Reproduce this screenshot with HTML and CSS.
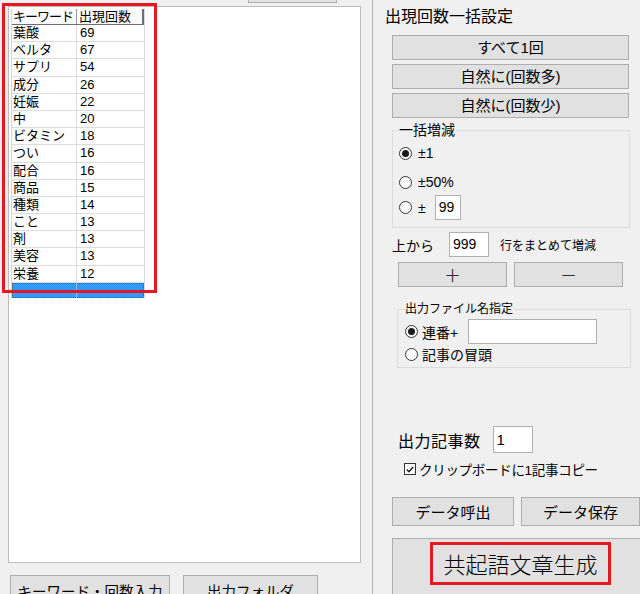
FILE: index.html
```html
<!DOCTYPE html>
<html lang="ja">
<head>
<meta charset="utf-8">
<title>共起語文章生成</title>
<link rel="stylesheet" href="styles.css">
</head>
<body>
<div class="app">
  <div class="left">
    <div class="top-strip"><div class="top-btn"></div></div>
    <div class="listbox">
      <div class="grid">
        <div class="grow head"><div class="c1 kana">キーワード</div><div class="c2">出現回数</div></div>
        <div class="grow"><div class="c1">葉酸</div><div class="c2">69</div></div>
        <div class="grow"><div class="c1">ベルタ</div><div class="c2">67</div></div>
        <div class="grow"><div class="c1">サプリ</div><div class="c2">54</div></div>
        <div class="grow"><div class="c1">成分</div><div class="c2">26</div></div>
        <div class="grow"><div class="c1">妊娠</div><div class="c2">22</div></div>
        <div class="grow"><div class="c1">中</div><div class="c2">20</div></div>
        <div class="grow"><div class="c1">ビタミン</div><div class="c2">18</div></div>
        <div class="grow"><div class="c1">つい</div><div class="c2">16</div></div>
        <div class="grow"><div class="c1">配合</div><div class="c2">16</div></div>
        <div class="grow"><div class="c1">商品</div><div class="c2">15</div></div>
        <div class="grow"><div class="c1">種類</div><div class="c2">14</div></div>
        <div class="grow"><div class="c1">こと</div><div class="c2">13</div></div>
        <div class="grow"><div class="c1">剤</div><div class="c2">13</div></div>
        <div class="grow"><div class="c1">美容</div><div class="c2">13</div></div>
        <div class="grow"><div class="c1">栄養</div><div class="c2">12</div></div>
        <div class="grow sel"><div class="c1"></div><div class="c2"></div></div>
      </div>
    </div>
    <div class="bottom-btns">
      <button class="btn bb1">キーワード・回数入力</button>
      <button class="btn bb2">出力フォルダ</button>
    </div>
    <div class="hl-list"></div>
  </div>

  <div class="right">
    <div class="title">出現回数一括設定</div>
    <div class="btn-stack">
      <button class="btn wide">すべて1回</button>
      <button class="btn wide">自然に(回数多)</button>
      <button class="btn wide">自然に(回数少)</button>
    </div>

    <fieldset class="group g1">
      <legend>一括増減</legend>
      <div class="rrow r1"><span class="radio on"></span><span>±1</span></div>
      <div class="rrow r2"><span class="radio"></span><span>±50%</span></div>
      <div class="rrow r3"><span class="radio"></span><span>±</span><span class="field f99">99</span></div>
    </fieldset>

    <div class="row-top">
      <span class="lbl-top">上から</span>
      <span class="field f999">999</span>
      <span class="small">行をまとめて増減</span>
    </div>

    <div class="pm">
      <button class="btn pmb">＋</button>
      <button class="btn pmb">－</button>
    </div>

    <fieldset class="group g2">
      <legend>出力ファイル名指定</legend>
      <div class="frow f1"><span class="radio on"></span><span class="ftxt">連番+</span><span class="field fname"></span></div>
      <div class="frow f2"><span class="radio"></span><span class="ftxt">記事の冒頭</span></div>
    </fieldset>

    <div class="count-row">
      <span class="count-lbl">出力記事数</span>
      <span class="field fcount">1</span>
    </div>

    <div class="check-row">
      <span class="check"><svg width="11" height="11" viewBox="0 0 11 11"><path d="M2 5.5 L4.3 8 L9 2.8" fill="none" stroke="#1a1a1a" stroke-width="1.6"/></svg></span>
      <span class="check-txt">クリップボードに1記事コピー</span>
    </div>

    <div class="data-btns">
      <button class="btn db1">データ呼出</button>
      <button class="btn db2">データ保存</button>
    </div>

    <button class="btn big"><span class="hl-text">共起語文章生成</span></button>
  </div>
</div>
</body>
</html>
```

FILE: styles.css
```css
html, body {
  margin: 0;
  padding: 0;
}
body {
  background: #f0f0f0;
  width: 640px;
  height: 594px;
  overflow: hidden;
  font-family: "Liberation Sans", "Noto Sans CJK JP", sans-serif;
  color: #000;
}
.app {
  display: flex;
  height: 594px;
}
.left {
  position: relative;
  width: 372px;
  flex: none;
  height: 594px;
  overflow: hidden;
}
.top-strip {
  height: 3px;
  overflow: hidden;
}
.top-btn {
  margin-left: 248px;
  width: 89px;
  height: 3px;
  box-sizing: border-box;
  border: 1px solid #adadad;
  border-top: none;
  background: #e1e1e1;
}
.listbox {
  margin: 3px 0 0 8px;
  width: 353px;
  height: 557px;
  box-sizing: border-box;
  border: 1px solid #bcbcbc;
  background: #fff;
  padding: 2px 0 0 2px;
}
.grid {
  width: 134px;
  border-left: 1px solid #d6d6d6;
  border-right: 1px solid #d6d6d6;
  box-sizing: border-box;
}
.grow {
  display: grid;
  grid-template-columns: 65px 67px;
  height: 17.2px;
  box-sizing: border-box;
  border-bottom: 1px solid #dcdcdc;
  font-size: 13px;
  line-height: 16px;
}
.grow .c1 {
  padding-left: 1px;
  border-right: 1px solid #dcdcdc;
  white-space: nowrap;
  overflow: hidden;
}
.grow .c2 {
  padding-left: 3px;
  white-space: nowrap;
}
.grow.head {
  height: 16px;
  border-bottom: 1px solid #6e6e6e;
  background: #fbfbfb;
  line-height: 15px;
}
.grow.head .c1 {
  border-right: 1px solid #9a9a9a;
}
.grow.head .c2 {
  padding-left: 2px;
  border-right: 2px solid #6e6e6e;
}
.kana {
  letter-spacing: -1px;
}
.grow.sel {
  background: #3399ff;
  height: 15px;
  outline: 1px dotted #6b5a3a;
  outline-offset: -1px;
  border-bottom: none;
}
.grow.sel .c1 {
  border-right: 1px solid #8fc6ff;
}
.bottom-btns {
  display: flex;
  margin: 12px 0 0 10px;
  gap: 13px;
}
.btn {
  background: #e1e1e1;
  border: 1px solid #adadad;
  font-family: "Liberation Sans", "Noto Sans CJK JP", sans-serif;
  color: #000;
  padding: 0;
  margin: 0;
  box-sizing: border-box;
  display: flex;
  align-items: center;
  justify-content: center;
}
.bb1, .bb2 {
  height: 34px;
  font-size: 14.5px;
  line-height: 20px;
  align-items: flex-start;
  padding-top: 6px;
}
.bb1 { width: 160px; }
.bb2 { width: 135px; }
.hl-list {
  position: absolute;
  left: 2px;
  top: 3px;
  width: 155px;
  height: 290px;
  box-sizing: border-box;
  border: 3px solid #e5171f;
}

.right {
  flex: none;
  width: 268px;
  height: 594px;
  overflow: hidden;
  border-left: 1px solid #b4b4b4;
  box-sizing: border-box;
}
.title {
  margin: 6px 0 0 12px;
  font-size: 16px;
  line-height: 22px;
}
.btn-stack {
  margin: 7px 0 0 19px;
  display: flex;
  flex-direction: column;
  gap: 4px;
}
.btn.wide {
  width: 237px;
  height: 25px;
  font-size: 15px;
  line-height: 20px;
}

.group {
  margin: 0;
  border: 1px solid #dcdcdc;
  box-sizing: border-box;
  min-width: 0;
}
.group legend {
  padding: 0 1px;
  margin-left: -1px;
}
.g1 {
  margin: 3px 0 0 19px;
  width: 238px;
  padding: 0 6px 7px 6px;
}
.g1 legend {
  font-size: 14px;
  line-height: 18px;
}
.rrow {
  display: flex;
  align-items: center;
  font-size: 14px;
  gap: 6px;
}
.r1 { margin-top: 4px; height: 20px; }
.r2 { margin-top: 9px; height: 20px; }
.r3 { margin-top: 3px; height: 25px; }
.radio {
  width: 13px;
  height: 13px;
  box-sizing: border-box;
  border: 1px solid #333;
  border-radius: 50%;
  background: #fff;
  display: inline-flex;
  align-items: center;
  justify-content: center;
  flex: none;
}
.radio.on::after {
  content: "";
  width: 7px;
  height: 7px;
  border-radius: 50%;
  background: #1a1a1a;
}
.field {
  display: inline-block;
  box-sizing: border-box;
  border: 1px solid #b0b0b0;
  background: #fff;
  height: 25px;
  font-size: 14px;
  line-height: 23px;
  padding-left: 3px;
  font-family: "Liberation Sans", sans-serif;
}
.f99 {
  width: 26px;
  margin-left: 3px;
}
.row-top {
  display: flex;
  align-items: center;
  margin: 4px 0 0 19px;
  height: 25px;
}
.lbl-top {
  font-size: 14px;
  width: 57px;
}
.f999 {
  width: 40px;
}
.small {
  font-size: 12px;
  margin-left: 11px;
}
.pm {
  display: flex;
  gap: 7px;
  margin: 5px 0 0 25px;
}
.pmb {
  width: 109px;
  height: 25px;
  font-size: 17px;
  font-family: "Noto Sans CJK JP", sans-serif;
  font-weight: 300;
  line-height: 20px;
}
.g2 {
  margin: 14px 0 0 24px;
  width: 234px;
  padding: 0 6px 3px 7px;
}
.g2 legend {
  font-size: 12px;
  line-height: 16px;
}
.frow {
  display: flex;
  align-items: center;
  font-size: 14px;
}
.frow .radio { margin-right: 4px; }
.f1 { margin-top: 2px; height: 25px; }
.f2 { height: 20px; }
.fname {
  width: 129px;
  margin-left: 10px;
}
.count-row {
  display: flex;
  align-items: center;
  margin: 58px 0 0 25px;
  height: 27px;
}
.count-lbl {
  font-size: 16px;
  letter-spacing: 0.5px;
}
.fcount {
  width: 40px;
  height: 27px;
  margin-left: 12px;
  line-height: 25px;
  font-size: 15px;
}
.check-row {
  display: flex;
  align-items: center;
  margin: 6px 0 0 31px;
  height: 20px;
}
.check {
  width: 12px;
  height: 12px;
  box-sizing: border-box;
  border: 1px solid #333;
  background: #fff;
  display: inline-flex;
  align-items: center;
  justify-content: center;
  margin-right: 3px;
}
.check svg { display: block; }
.check-txt {
  font-size: 13.5px;
  letter-spacing: -0.3px;
}
.data-btns {
  display: flex;
  gap: 7px;
  margin: 18px 0 0 19px;
}
.db1, .db2 {
  height: 29px;
  font-size: 15px;
  flex: none;
}
.db1 { width: 122px; }
.db2 { width: 119px; }
.btn.big {
  margin: 12px 0 0 19px;
  width: 257px;
  height: 62px;
  align-items: flex-start;
  padding-top: 3px;
  flex: none;
}
.hl-text {
  display: inline-block;
  border: 3px solid #e5171f;
  padding: 0 10px;
  font-size: 22px;
  line-height: 37px;
  font-weight: 300;
  font-family: "Noto Sans CJK JP", sans-serif;
}
```
